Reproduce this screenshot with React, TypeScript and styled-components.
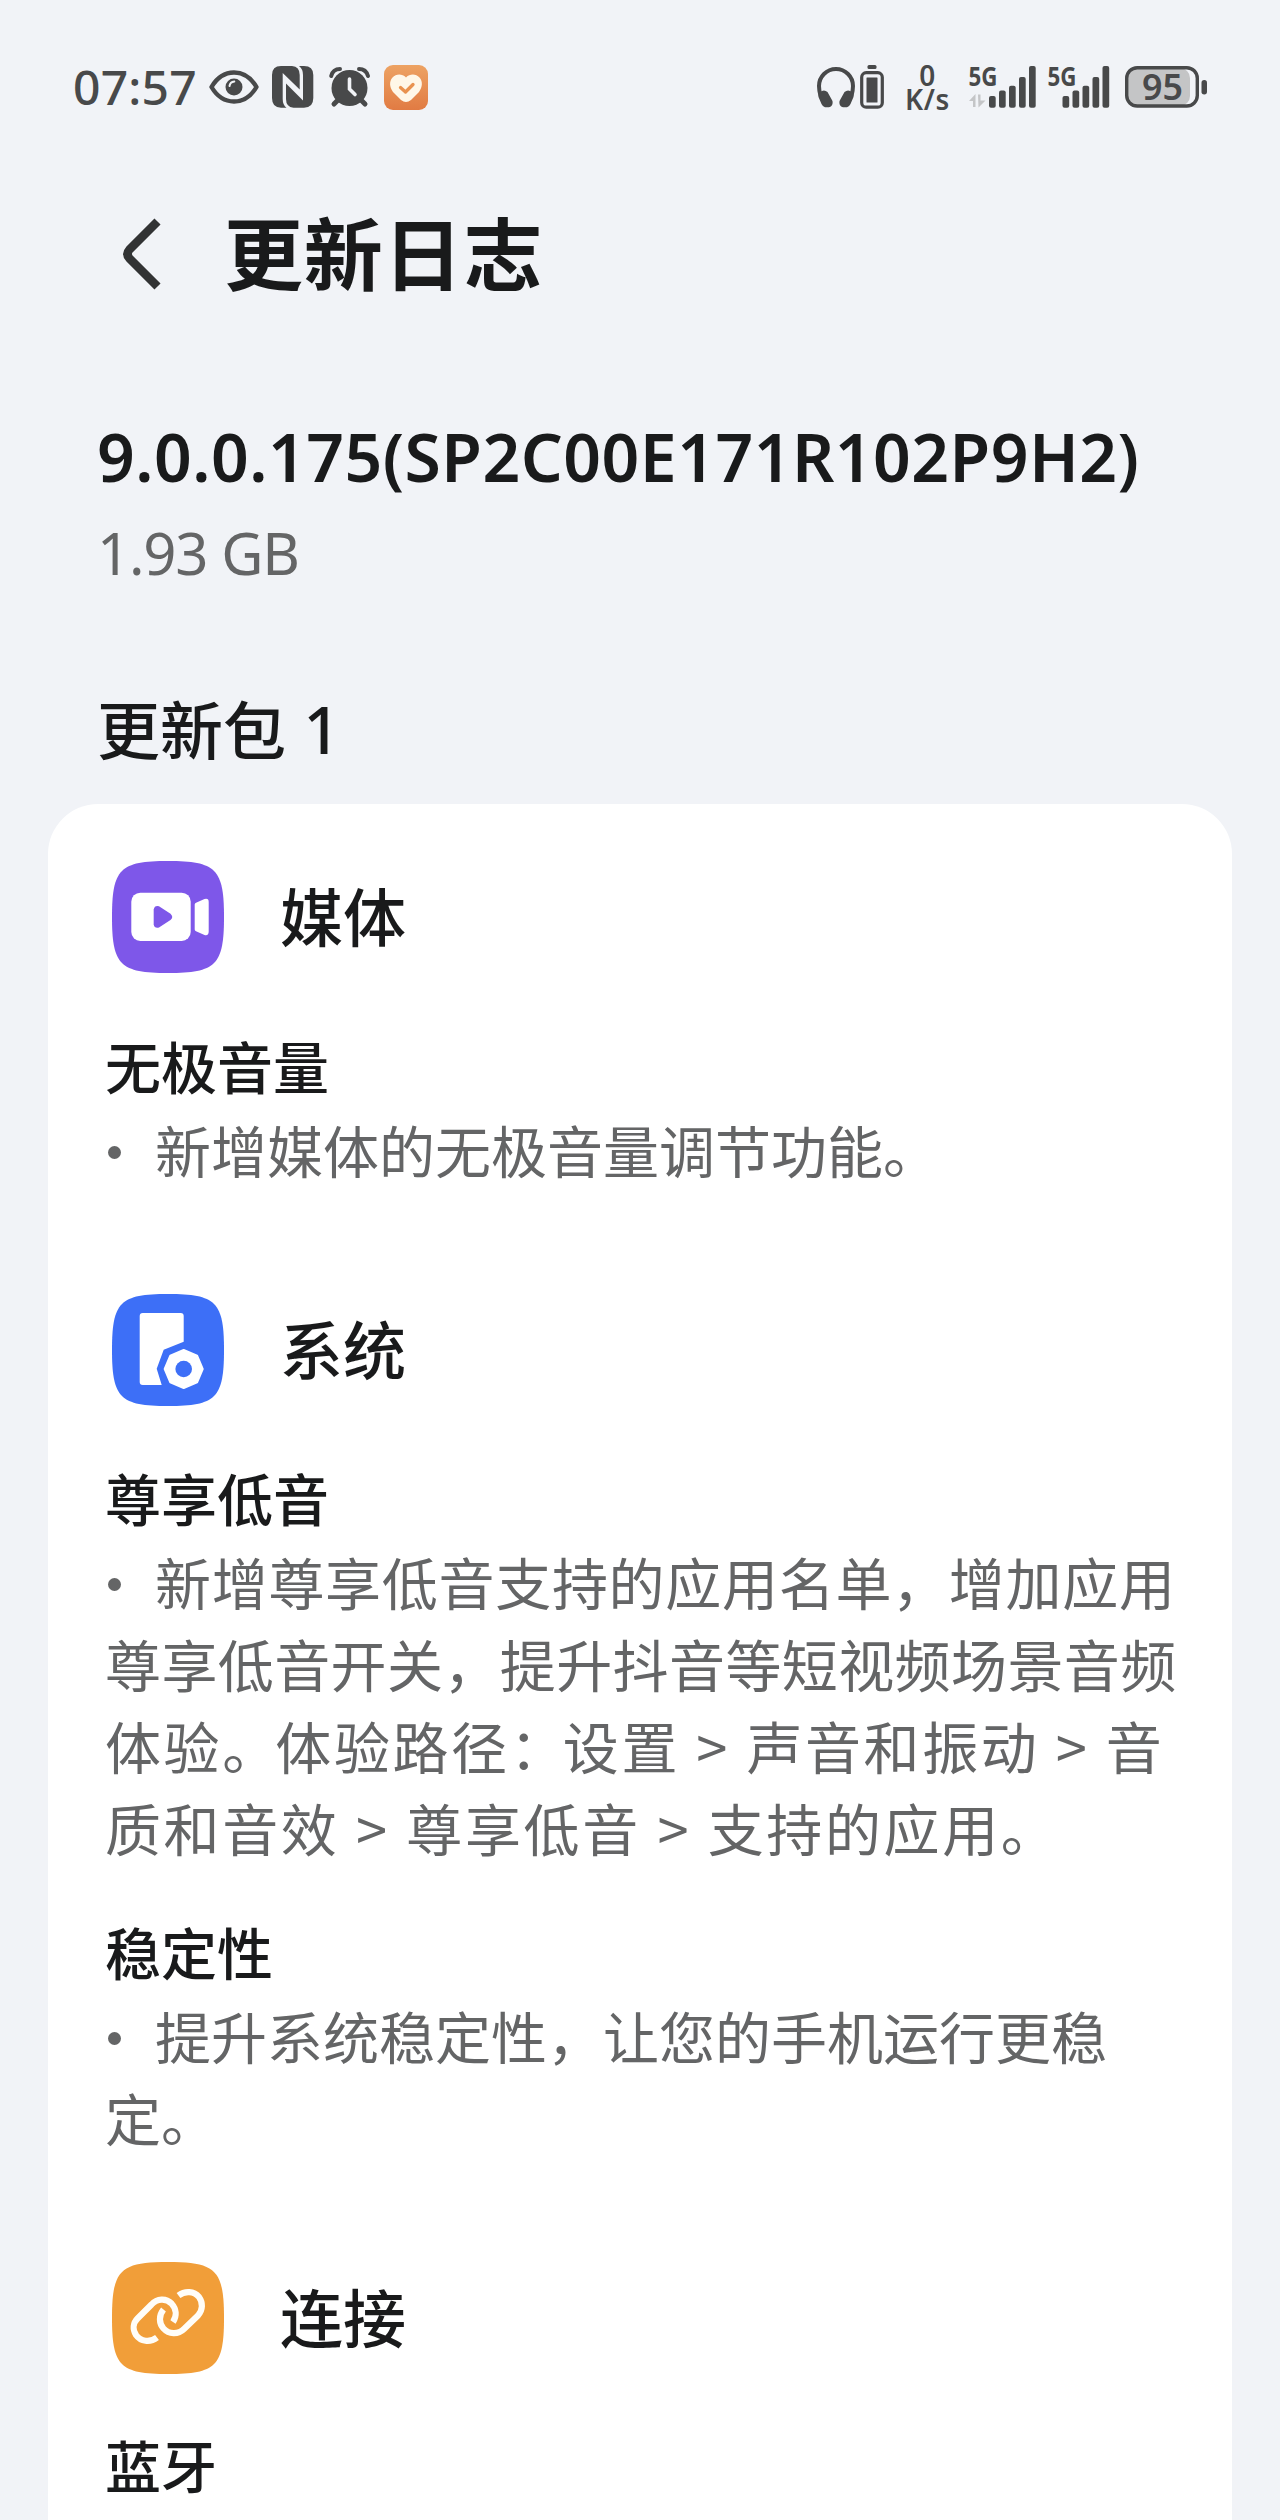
import React from "react";
import styled, { createGlobalStyle } from "styled-components";

const INK = "#191a1b";
const STATUS = "#48494a";
const MUTED = "#646566";
const CJK = `"Noto Sans CJK SC", sans-serif`;
const LATIN = `"Noto Sans", "Noto Sans CJK SC", sans-serif`;

const GlobalStyle = createGlobalStyle`
  * { box-sizing: border-box; }
  body { margin: 0; background: #f1f3f7; }
`;

const Screen = styled.main`
  width: 1280px;
  height: 2520px;
  overflow: hidden;
  background: #f1f3f7;
  color: ${INK};
  font-family: ${CJK};
  display: flex;
  flex-direction: column;
  svg { display: block; flex: none; overflow: visible; }
`;

const StatusBar = styled.div`
  height: 120px;
  padding: 54px 73px 0 73px;
  display: flex;
  justify-content: space-between;
  color: ${STATUS};
`;

const StatusGroup = styled.div`
  height: 66px;
  display: flex;
  align-items: center;
`;

const Clock = styled.span`
  width: 136px;
  font: 500 48px/66px ${LATIN};
  letter-spacing: 0.2px;
  white-space: nowrap;
`;

const IconSlot = styled.span<{ $gap: number }>`
  margin-right: ${(p) => p.$gap}px;
`;

const Speed = styled.div`
  width: 46px;
  margin-right: 18px;
  display: flex;
  flex-direction: column;
  align-items: center;
  font: 600 28px/24px ${LATIN};
  letter-spacing: 0.6px;
  white-space: nowrap;
`;

const Header = styled.header`
  height: 270px;
  padding: 74px 0 0 121px;
  display: flex;
  align-items: flex-start;
`;

const BackButton = styled.button`
  width: 103px;
  height: 120px;
  padding: 0;
  border: 0;
  background: none;
  display: flex;
  align-items: center;
`;

const Title = styled.h1`
  margin: 0;
  font: 700 79px/114px ${CJK};
  letter-spacing: 0.8px;
`;

const Release = styled.section`
  height: 268px;
  padding: 18px 0 0 97px;
`;

const Version = styled.h2`
  margin: 0;
  font: 600 66px/96px ${LATIN};
  letter-spacing: 0.5px;
  white-space: nowrap;
`;

const Size = styled.p`
  margin: 0;
  font: 400 58px/98px ${LATIN};
  letter-spacing: -1.2px;
  color: ${MUTED};
  white-space: nowrap;
`;

const PackageTitle = styled.h3`
  height: 146px;
  margin: 0;
  padding: 19px 0 0 97px;
  font: 500 63px/100px ${CJK};
  word-spacing: 3px;
  white-space: pre;
`;

const PackageNumber = styled.span`
  font-family: ${LATIN};
  font-size: 65px;
`;

const Card = styled.section`
  width: 1184px;
  flex: 1;
  margin-left: 48px;
  padding: 57px 0 0 57px;
  border-radius: 50px 50px 0 0;
  background: #fff;
`;

const Category = styled.div<{ $after: number }>`
  height: 112px;
  margin-bottom: ${(p) => p.$after}px;
  padding-left: 7px;
  display: flex;
  gap: 56px;
`;

const CategoryName = styled.h3`
  margin: 0;
  font: 500 63px/106px ${CJK};
`;

const Feature = styled.div<{ $after: number }>`
  margin-bottom: ${(p) => p.$after}px;
`;

const FeatureName = styled.h4`
  margin: 0 0 2px;
  font: 500 56px/82px ${CJK};
`;

const Line = styled.p<{ $track?: number; $word?: number }>`
  height: 82px;
  margin: 0;
  display: flex;
  font: 400 56px/82px ${CJK};
  letter-spacing: ${(p) => p.$track ?? 0}px;
  word-spacing: ${(p) => p.$word ?? 0}px;
  color: ${MUTED};
  white-space: pre;
`;

const Tight = styled.span`
  margin-right: -5.5px;
`;

const Bullet = styled.span`
  width: 50px;
  display: flex;
  align-items: center;
  &::before {
    content: "";
    width: 13px;
    height: 13px;
    margin: 7px 0 0 3px;
    border-radius: 50%;
    background: ${MUTED};
  }
`;

const EyeIcon = () => (
  <svg width="50" height="34" viewBox="0 0 50 34" fill="none">
    <path d="M2.5 17C9 6 17 2.5 25 2.5S41 6 47.5 17C41 28 33 31.5 25 31.5S9 28 2.5 17Z" stroke={STATUS} strokeWidth="4.400" strokeLinejoin="round" />
    <circle cx="25" cy="17" r="8.500" fill={STATUS} />
    <path d="M20.500 16c.4-2.600 2.200-4.200 4.800-4.500" stroke="#f1f3f7" strokeWidth="2" strokeLinecap="round" />
  </svg>
);

const NfcIcon = () => (
  <svg width="42" height="42" viewBox="0 0 42 42">
    <path d="M9 0H20Q27.700 0.500 27.700 9V23.500L10.700 7V33Q10.700 39 14.500 41.700H9Q0 41.700 0 32V9Q0 0 9 0Z" fill={STATUS} />
    <path d="M32 41.700H21.500Q14 41 14 33V17.500L31 34.500V9Q31 3 27 0H32Q41.300 0 41.300 9V32Q41.300 41.700 32 41.700Z" fill={STATUS} />
  </svg>
);

const AlarmIcon = () => (
  <svg width="42" height="40" viewBox="0 0 42 40">
    <circle cx="20.500" cy="21" r="18" fill={STATUS} />
    <path d="M2.200 9Q4 2 11 2M39 9Q37 2 30 2" stroke={STATUS} strokeWidth="4" fill="none" strokeLinecap="round" />
    <path d="M9 33L5 37M32 33L36 37" stroke={STATUS} strokeWidth="5" strokeLinecap="round" />
    <path d="M20.500 12V22L26 27.500" stroke="#f1f3f7" strokeWidth="3.600" fill="none" strokeLinecap="round" />
  </svg>
);

const HeartBadge = () => (
  <svg width="44" height="45" viewBox="0 0 44 45">
    <defs>
      <linearGradient id="badge" x1="0" y1="0" x2="0" y2="1">
        <stop offset="0" stopColor="#eda263" />
        <stop offset="1" stopColor="#e17b43" />
      </linearGradient>
    </defs>
    <rect width="44" height="45" rx="9" fill="url(#badge)" />
    <path d="M22 12.500C18 8.500 12 8.800 8.500 12.500C5 16.500 5.500 22 9 27L17 35Q22 39 27 35L35 27C38.500 22 39 16.500 35.500 12.500C32 8.800 26 8.500 22 12.500Z" fill="#fff7e8" />
    <path d="M16.500 22.500L21.500 27L29 19.500" stroke="#e9924f" strokeWidth="3.300" fill="none" strokeLinecap="round" strokeLinejoin="round" />
  </svg>
);

const HeadphonesIcon = () => (
  <svg width="38" height="41" viewBox="0 0 38 41">
    <path d="M3.500 29C2.500 25 2 22 2 19A17 17 0 0 1 36 19C36 22 35.500 25 34.500 29" stroke={STATUS} strokeWidth="4" fill="none" />
    <path d="M3 25Q7 22 10.500 25L15.500 34Q16.500 39 12 40.300H8Q6 40 4.500 37L1.500 30Q1 27 3 25ZM35 25Q31 22 27.500 25L22.500 34Q21.500 39 26 40.300H30Q32 40 33.500 37L36.500 30Q37 27 35 25Z" fill={STATUS} />
  </svg>
);

const DeviceBattery = () => (
  <svg width="24" height="44" viewBox="0 0 24 44">
    <rect x="7.500" width="9" height="4" rx="1.500" fill={STATUS} />
    <rect x="1.700" y="7.700" width="20.600" height="34.500" rx="4.500" fill="none" stroke={STATUS} strokeWidth="3.200" />
    <rect x="6.500" y="12.500" width="11" height="25" rx="0.500" fill={STATUS} />
  </svg>
);

const SIGNAL_TOPS = [30, 24.5, 19.7, 11, 0];

const Signal = ({ first, step, data }: { first: number; step: number; data?: boolean }) => (
  <svg width={first + step * 4 + 7} height="42" viewBox={`0 0 ${first + step * 4 + 7} 42`}>
    <text x="-0.500" y="19.800" fontFamily="Noto Sans" fontWeight="700" fontSize="27" textLength="29" lengthAdjust="spacingAndGlyphs" fill={STATUS}>5G</text>
    {data && <path d="M0 35L6.500 28V41H4V35ZM9 28.500H11.500V34.500H16.500L9.500 41.500Z" fill="#c4c5c7" />}
    {SIGNAL_TOPS.map((top, i) => (
      <rect key={top} x={first + step * i} y={top} width="6.700" height={41.7 - top} rx="2" fill={STATUS} />
    ))}
  </svg>
);

const MainBattery = () => (
  <svg width="82" height="42" viewBox="0 0 82 42">
    <rect x="2" y="2" width="63" height="38" rx="10" fill="#c4c5c6" />
    <rect x="1.700" y="1.700" width="70.600" height="38.300" rx="10.500" fill="none" stroke={STATUS} strokeWidth="3.400" />
    <rect x="76.500" y="14" width="5.500" height="14.500" rx="2.700" fill={STATUS} />
    <text x="17" y="33.800" fontFamily="Noto Sans" fontWeight="600" fontSize="36.500" textLength="41" lengthAdjust="spacingAndGlyphs" fill={STATUS}>95</text>
  </svg>
);

const BackIcon = () => (
  <svg width="42" height="76" viewBox="0 0 42 76">
    <path d="M36.500 5.500L8.500 33.500Q4.500 38 8.500 42.500L36.500 70.500" fill="none" stroke="#323334" strokeWidth="8.600" strokeLinejoin="round" />
  </svg>
);

const Tile = ({ color, children }: { color: string; children: React.ReactNode }) => (
  <svg width="112" height="112" viewBox="0 0 112 112">
    <path d="M0 56C0 8 8 0 56 0S112 8 112 56 104 112 56 112 0 104 0 56Z" fill={color} />
    {children}
  </svg>
);

const MediaIcon = () => (
  <Tile color="#7e57e9">
    <rect x="19.300" y="31.700" width="59.400" height="48.300" rx="9" fill="#fff" />
    <path d="M82.700 43.500Q82.700 42.300 84 41.700L92.500 38Q96.700 36.800 96.700 41V70.500Q96.700 75 92.500 74L84 70.300Q82.700 69.800 82.700 68.500Z" fill="#fff" />
    <path d="M41.700 48.500Q42.500 44.300 47 45.300L58.500 52.700Q62 56 58.500 59L47 66.500Q42.500 67.700 41.700 63.500Z" fill="#7e57e9" />
  </Tile>
);

const SystemIcon = () => (
  <Tile color="#3d6ff7">
    <path d="M30.700 19H68.700Q71.700 19 71.700 22V47.700L51.700 55.700L44.700 74.700L49.700 91H30.700Q27.700 91 27.700 88V22Q27.700 19 30.700 19Z" fill="#fff" />
    <path d="M71.700 56L85.100 61.600L90.700 75L85.100 88.400L71.700 94L58.300 88.400L52.700 75L58.300 61.600Z" fill="#fff" stroke="#fff" strokeWidth="2" strokeLinejoin="round" />
    <circle cx="71.700" cy="75" r="8.300" fill="#3d6ff7" />
  </Tile>
);

const LinkIcon = () => (
  <Tile color="#f19e39">
    <g fill="none" stroke="#fffdf8" strokeWidth="6.200">
      <path d="M45 75.500C38 81 28.500 79.500 24 73C20.500 67.500 21 61 25.500 56.500L39.500 42.500C45 36.500 54 36 59.500 41.500C64.500 47 65 54 61 60" />
      <path d="M51.500 47.500C46.500 53.500 47 61.500 51.500 66.500C57 72.500 66 72.800 72 67L86 53.500C91 48 91 40.500 87 35C82 29 73 28.500 66.500 33.500" />
    </g>
  </Tile>
);

export default function App() {
  return (
    <Screen>
      <GlobalStyle />
      <StatusBar>
        <StatusGroup>
          <Clock>07:57</Clock>
          <IconSlot $gap={13}><EyeIcon /></IconSlot>
          <IconSlot $gap={15}><NfcIcon /></IconSlot>
          <IconSlot $gap={13}><AlarmIcon /></IconSlot>
          <HeartBadge />
        </StatusGroup>
        <StatusGroup>
          <IconSlot $gap={5}><HeadphonesIcon /></IconSlot>
          <IconSlot $gap={21}><DeviceBattery /></IconSlot>
          <Speed>
            <span>0</span>
            <span>K/s</span>
          </Speed>
          <IconSlot $gap={12}><Signal first={20} step={10} data /></IconSlot>
          <IconSlot $gap={16}><Signal first={14.5} step={10} /></IconSlot>
          <MainBattery />
        </StatusGroup>
      </StatusBar>

      <Header>
        <BackButton aria-label="返回"><BackIcon /></BackButton>
        <Title>更新日志</Title>
      </Header>

      <Release>
        <Version>9.0.0.175(SP2C00E171R102P9H2)</Version>
        <Size>1.93 GB</Size>
      </Release>

      <PackageTitle>更新包 <PackageNumber>1</PackageNumber></PackageTitle>

      <Card>
        <Category $after={51}>
          <MediaIcon />
          <CategoryName>媒体</CategoryName>
        </Category>
        <Feature $after={104}>
          <FeatureName>无极音量</FeatureName>
          <Line><Bullet />新增媒体的无极音量调节功能。</Line>
        </Feature>

        <Category $after={50}>
          <SystemIcon />
          <CategoryName>系统</CategoryName>
        </Category>
        <Feature $after={42}>
          <FeatureName>尊享低音</FeatureName>
          <Line $track={0.7}><Bullet />新增尊享低音支持的应用名单，增加应用</Line>
          <Line $track={0.4}>尊享低音开关，提升抖音等短视频场景音频</Line>
          <Line $track={2.6} $word={1.2}>
            <Tight>体验。</Tight><Tight>体验路径：</Tight><span>设置 &gt; 声音和振动 &gt; 音</span>
          </Line>
          <Line $track={2.6} $word={1.5}>质和音效 &gt; 尊享低音 &gt; 支持的应用。</Line>
        </Feature>
        <Feature $after={104}>
          <FeatureName>稳定性</FeatureName>
          <Line><Bullet />提升系统稳定性，让您的手机运行更稳</Line>
          <Line>定。</Line>
        </Feature>

        <Category $after={49}>
          <LinkIcon />
          <CategoryName>连接</CategoryName>
        </Category>
        <Feature $after={0}>
          <FeatureName>蓝牙</FeatureName>
        </Feature>
      </Card>
    </Screen>
  );
}
